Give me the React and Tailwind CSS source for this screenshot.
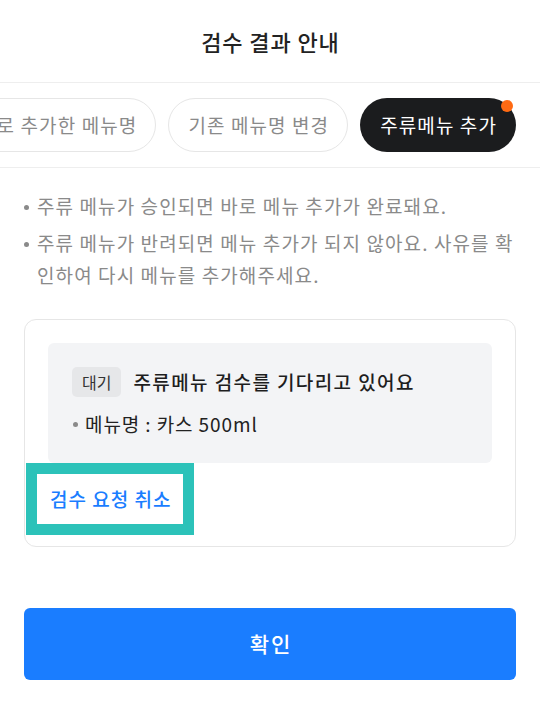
import React from "react";

function Pill({ children, active, dot }) {
  if (active) {
    return (
      <div className="relative shrink-0">
        <div className="flex h-[54px] items-center rounded-full bg-[#1b1c1e] pl-[20px] pr-[19px] text-[19px] tracking-[1.1px] text-white whitespace-nowrap">
          {children}
        </div>
        {dot && (
          <span className="absolute right-[3px] top-[2px] h-3 w-3 rounded-full bg-[#ff6a13]" />
        )}
      </div>
    );
  }
  return (
    <div className="flex h-[54px] shrink-0 items-center rounded-full border border-[#e6e6e6] pl-[19px] pr-[18px] text-[19px] tracking-[1.1px] text-[#8a8a8a] whitespace-nowrap">
      {children}
    </div>
  );
}

function Bullet({ children }) {
  return (
    <li className="flex items-start">
      <span className="mt-[15px] ml-[-1px] mr-[8px] h-[5px] w-[5px] shrink-0 rounded-full bg-[#8a8a8a]" />
      <span>{children}</span>
    </li>
  );
}

export default function App() {
  return (
    <div
      className="min-h-[704px] w-[540px] bg-white"
      style={{ fontFamily: '"Noto Sans CJK KR", "Noto Sans", sans-serif' }}
    >
      <header className="flex h-[83px] items-center justify-center border-b border-[#eeeeee]">
        <h1 className="pl-[1px] text-[22px] font-medium tracking-[0.9px] text-[#222222]">검수 결과 안내</h1>
      </header>

      <div className="flex h-[85px] items-center justify-end gap-3 overflow-hidden border-b border-[#eeeeee] pr-6">
        <Pill>새로 추가한 메뉴명</Pill>
        <Pill>기존 메뉴명 변경</Pill>
        <Pill active dot>
          주류메뉴 추가
        </Pill>
      </div>

      <ul className="flex flex-col gap-[5px] pl-[25px] pr-6 pt-[22px] text-[19px] leading-[32px] tracking-[1.1px] text-[#8a8a8a]">
        <Bullet>주류 메뉴가 승인되면 바로 메뉴 추가가 완료돼요.</Bullet>
        <Bullet>주류 메뉴가 반려되면 메뉴 추가가 되지 않아요. 사유를 확인하여 다시 메뉴를 추가해주세요.</Bullet>
      </ul>

      <div className="mx-6 mt-[28px] rounded-[12px] border border-[#e6e6e6] px-[23px] pt-[23px] pb-[22px]">
        <div className="flex flex-col gap-[13px] rounded-[6px] bg-[#f3f4f6] px-6 pt-6 pb-[25px]">
          <div className="flex items-center gap-3">
            <span className="flex h-[30px] items-center rounded-[5px] bg-[#e6e7e9] px-[10px] text-[16px] text-[#333333]">
              대기
            </span>
            <span className="text-[19px] font-medium tracking-[1.4px] text-[#1e1e1e]">
              주류메뉴 검수를 기다리고 있어요
            </span>
          </div>
          <div className="flex items-center text-[19px] leading-[28px] tracking-[0.9px] text-[#222222]">
            <span className="mr-[7px] ml-[1px] h-[5px] w-[5px] rounded-full bg-[#8a8a8a]" />
            <span>메뉴명 : 카스 500ml</span>
          </div>
        </div>
        <button className="ml-[-11px] mt-[11px] flex h-[50px] items-center bg-white pl-[13px] pr-[12px] text-[19px] font-medium tracking-[1px] text-[#1a7dff] outline outline-[11px] outline-[#2cc2b9]">
          검수 요청 취소
        </button>
      </div>

      <div className="px-6 pt-[61px]">
        <button className="flex h-[72px] w-full items-center justify-center rounded-[6px] bg-[#1a7dff] pl-[2px] text-[21px] font-medium tracking-[2px] text-white">
          확인
        </button>
      </div>
    </div>
  );
}
